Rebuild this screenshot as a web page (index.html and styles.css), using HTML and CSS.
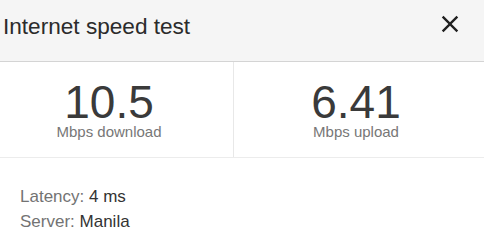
FILE: index.html
```html
<!DOCTYPE html>
<html lang="en">
<head>
  <meta charset="UTF-8">
  <meta name="viewport" content="width=device-width, initial-scale=1.0">
  <title>Internet speed test</title>
  <link rel="stylesheet" href="styles.css">
</head>
<body>
  <!-- Header -->
  <div class="header">
    <h1>Internet speed test</h1>
    <div class="close-btn" title="Close">
      <svg viewBox="0 0 24 24" width="28" height="28">
        <path fill="#202020" d="M19 6.41L17.59 5 12 10.59 6.41 5 5 6.41 10.59 12 5 17.59 6.41 19 12 13.41 17.59 19 19 17.59 13.41 12z"/>
      </svg>
    </div>
  </div>

  <!-- Results -->
  <div class="stats">
    <div class="stat stat-down">
      <div class="stat-value">10.5</div>
      <div class="stat-label">Mbps download</div>
    </div>
    <div class="stat stat-up">
      <div class="stat-value">6.41</div>
      <div class="stat-label">Mbps upload</div>
    </div>
  </div>

  <!-- Details -->
  <div class="details">
    <div class="row"><span class="key">Latency:</span> <span class="val">4 ms</span></div>
    <div class="row"><span class="key">Server:</span> <span class="val">Manila</span></div>
  </div>
</body>
</html>
```

FILE: styles.css
```css
  body {
    font-family: "Liberation Sans", Arial, sans-serif;
    margin: 0;
    background-color: #fff;
    color: #333;
  }

  /* Header */
  .header {
    display: flex;
    justify-content: space-between;
    align-items: flex-start;
    height: 61px;
    background-color: #f5f5f5;
    border-bottom: 1px solid #d4d4d4;
    padding: 0 20px 0 3px;
  }
  .header h1 {
    margin: 0;
    padding-top: 16px;
    font-size: 22.6px;
    line-height: 22px;
    font-weight: normal;
    color: #2b2b2b;
  }
  .close-btn {
    padding-top: 10px;
    cursor: pointer;
  }
  .close-btn svg {
    display: block;
  }

  /* Results */
  .stats {
    display: flex;
    border-bottom: 1px solid #ececec;
  }
  .stat {
    text-align: center;
    padding-top: 20px;
    padding-bottom: 16px;
  }
  .stat-down {
    width: 218px;
    padding-right: 15px;
    border-right: 1px solid #e8e8e8;
  }
  .stat-up {
    flex: 1;
    padding-right: 6px;
  }
  .stat-value {
    font-size: 46px;
    line-height: 40px;
    color: #3a3a3a;
  }
  .stat-label {
    margin-top: 1px;
    font-size: 15px;
    line-height: 18px;
    color: #777;
  }

  /* Details */
  .details {
    padding: 26px 0 0 20px;
    font-size: 17px;
    line-height: 25px;
  }
  .details .key {
    color: #737373;
  }
  .details .val {
    color: #333;
  }
```
